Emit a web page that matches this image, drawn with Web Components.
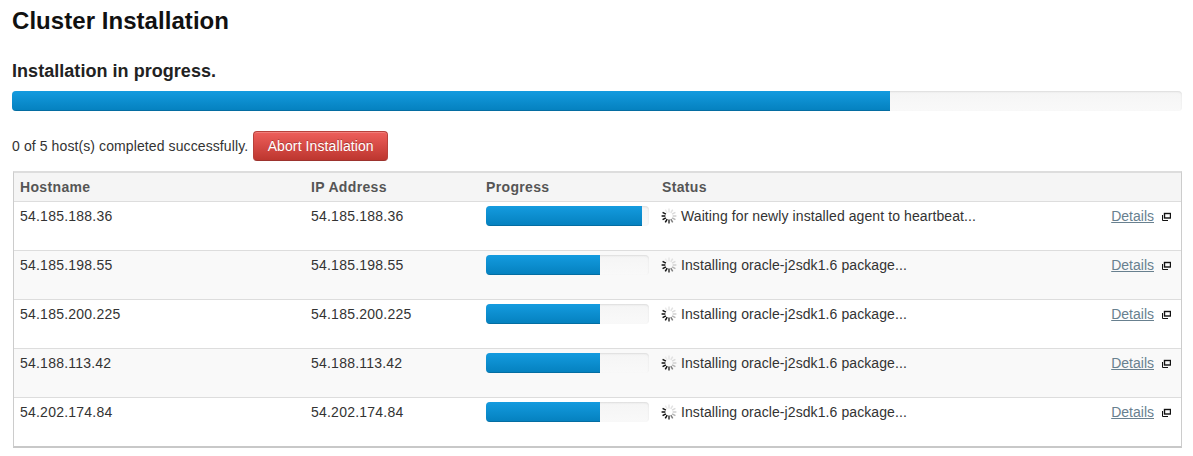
<!DOCTYPE html>
<html>
<head>
<meta charset="utf-8">
<title>Cluster Installation</title>
<style>
  html, body { margin: 0; background: #fff; }
  body { font-family: "Liberation Sans", Arial, sans-serif; color: #333; }
</style>
</head>
<body>
<cluster-install>
  <span slot="title">Cluster Installation</span>
  <span slot="subtitle">Installation in progress.</span>
  <span slot="summary">0 of 5 host(s) completed successfully.</span>
  <host-table>
    <host-row host="54.185.188.36" percent="96">Waiting for newly installed agent to heartbeat...</host-row>
    <host-row host="54.185.198.55" percent="70" striped>Installing oracle-j2sdk1.6 package...</host-row>
    <host-row host="54.185.200.225" percent="70">Installing oracle-j2sdk1.6 package...</host-row>
    <host-row host="54.188.113.42" percent="70" striped>Installing oracle-j2sdk1.6 package...</host-row>
    <host-row host="54.202.174.84" percent="70">Installing oracle-j2sdk1.6 package...</host-row>
  </host-table>
</cluster-install>

<script>
class ProgressBar extends HTMLElement {
  constructor() {
    super();
    const shadowRoot = this.attachShadow({ mode: 'open' });
    shadowRoot.innerHTML = `
      <style>
        :host { display: block; height: 20px; border-radius: 4px; overflow: hidden;
          background: linear-gradient(#f5f5f5, #f9f9f9);
          box-shadow: inset 0 1px 2px rgba(0,0,0,.1); }
        #fill { height: 100%; width: ${this.getAttribute('percent')}%;
          background: linear-gradient(#149bdf, #0480be);
          box-shadow: inset 0 -1px 0 rgba(0,0,0,.15); }
      </style>
      <div id="fill"></div>`;
  }
}
customElements.define('progress-bar', ProgressBar);

class AbortButton extends HTMLElement {
  constructor() {
    super();
    const shadowRoot = this.attachShadow({ mode: 'open' });
    shadowRoot.innerHTML = `
      <style>
        :host { display: inline-block; box-sizing: border-box; width: 135px; height: 30px;
          line-height: 28px; text-align: center; font-size: 14px; color: #fff;
          background: linear-gradient(#ee5f5b, #bd362f);
          border: 1px solid #b8413b; border-bottom-color: #9c332e; border-radius: 4px;
          text-shadow: 0 -1px 0 rgba(0,0,0,.25);
          box-shadow: inset 0 1px 0 rgba(255,255,255,.2); }
      </style>
      <slot></slot>`;
  }
}
customElements.define('abort-button', AbortButton);

class StatusSpinner extends HTMLElement {
  constructor() {
    super();
    const shadowRoot = this.attachShadow({ mode: 'open' });
    const colors = ['#e6e6e6','#e2e2e2','#dadada','#cfcfcf','#b4b4b4','#7c7c7c','#333','#0c0c0c','#0c0c0c','#0c0c0c','#1a1a1a','#ebebeb'];
    let ticks = '';
    for (let i = 0; i < 12; i++) {
      // starts from the top, goes clockwise
      ticks += `<line x1="8" y1=".6" x2="8" y2="4.4" stroke="${colors[i]}" stroke-width="1.5" transform="rotate(${i * 30} 8 8)"/>`;
    }
    shadowRoot.innerHTML = `
      <style>
        :host { display: inline-block; width: 16px; height: 16px; }
        svg { display: block; }
      </style>
      <svg width="16" height="16" viewBox="0 0 16 16">${ticks}</svg>`;
  }
}
customElements.define('status-spinner', StatusSpinner);

class DetailsLink extends HTMLElement {
  constructor() {
    super();
    const shadowRoot = this.attachShadow({ mode: 'open' });
    shadowRoot.innerHTML = `
      <style>
        :host { display: flex; align-items: center; gap: 8px; font-size: 14px; }
        a { color: #68808f; text-decoration: underline; }
        svg { display: block; }
      </style>
      <a href="#">Details</a>
      <svg width="9" height="9" viewBox="0 0 9 9" fill="none" stroke="#111">
        <rect x="2.5" y="1.5" width="6" height="4.5" stroke-width="1.4"/>
        <path d="M.5 3v5.5H6" stroke-width="1"/>
      </svg>`;
  }
}
customElements.define('details-link', DetailsLink);

class HostRow extends HTMLElement {
  constructor() {
    super();
    const shadowRoot = this.attachShadow({ mode: 'open' });
    const host = this.getAttribute('host');
    shadowRoot.innerHTML = `
      <style>
        :host { display: grid; grid-template-columns: 291px 175px 163px 1fr auto; column-gap: 0;
          box-sizing: border-box; height: 49px; padding: 4px 10px 0 6px;
          border-top: 1px solid #ddd; font-size: 14px; line-height: 20px; color: #333; }
        :host([striped]) { background: #f9f9f9; }
        .ip { letter-spacing: .22px; }
        #status { display: flex; align-items: flex-start; gap: 3px; padding-left: 13px; letter-spacing: .09px; }
        status-spinner { margin-top: 2px; margin-left: -1px; margin-right: 1px; }
        details-link { height: 20px; }
      </style>
      <div class="ip">${host}</div>
      <div class="ip">${host}</div>
      <progress-bar percent="${this.getAttribute('percent')}"></progress-bar>
      <div id="status"><status-spinner></status-spinner><span><slot></slot></span></div>
      <details-link></details-link>`;
  }
}
customElements.define('host-row', HostRow);

class HostTable extends HTMLElement {
  constructor() {
    super();
    const shadowRoot = this.attachShadow({ mode: 'open' });
    shadowRoot.innerHTML = `
      <style>
        :host { display: block; box-sizing: border-box; height: 277px; margin-left: 1px;
          border: 2px solid #ddd; border-left: 1px solid #ccc; border-right: 1px solid #ccc;
          border-bottom-color: #c8c8c8; }
        #head { display: grid; grid-template-columns: 291px 175px 176px 1fr; height: 28px;
          padding-left: 6px; align-items: center; background: #f5f5f5;
          font-size: 14px; font-weight: bold; color: #555; letter-spacing: .35px; }
      </style>
      <div id="head"><div>Hostname</div><div>IP Address</div><div>Progress</div><div>Status</div></div>
      <slot></slot>`;
  }
}
customElements.define('host-table', HostTable);

class ClusterInstall extends HTMLElement {
  constructor() {
    super();
    const shadowRoot = this.attachShadow({ mode: 'open' });
    shadowRoot.innerHTML = `
      <style>
        :host { display: block; box-sizing: border-box; width: 1193px; height: 456px; padding: 0 11px 0 12px; }
        h2 { margin: 0; padding-top: 7px; height: 62px; box-sizing: border-box; font-size: 24px; line-height: 27px; color: #111; letter-spacing: .05px; }
        h4 { margin: 0; height: 29px; font-size: 18px; line-height: 19px; color: #222; letter-spacing: .04px; }
        #actions { display: flex; align-items: center; gap: 5px; height: 30px; margin: 20px 0 10px; font-size: 14px; letter-spacing: .1px; }
      </style>
      <h2><slot name="title"></slot></h2>
      <h4><slot name="subtitle"></slot></h4>
      <progress-bar percent="75"></progress-bar>
      <div id="actions"><span><slot name="summary"></slot></span><abort-button>Abort Installation</abort-button></div>
      <slot></slot>`;
  }
}
customElements.define('cluster-install', ClusterInstall);
</script>
</body>
</html>
